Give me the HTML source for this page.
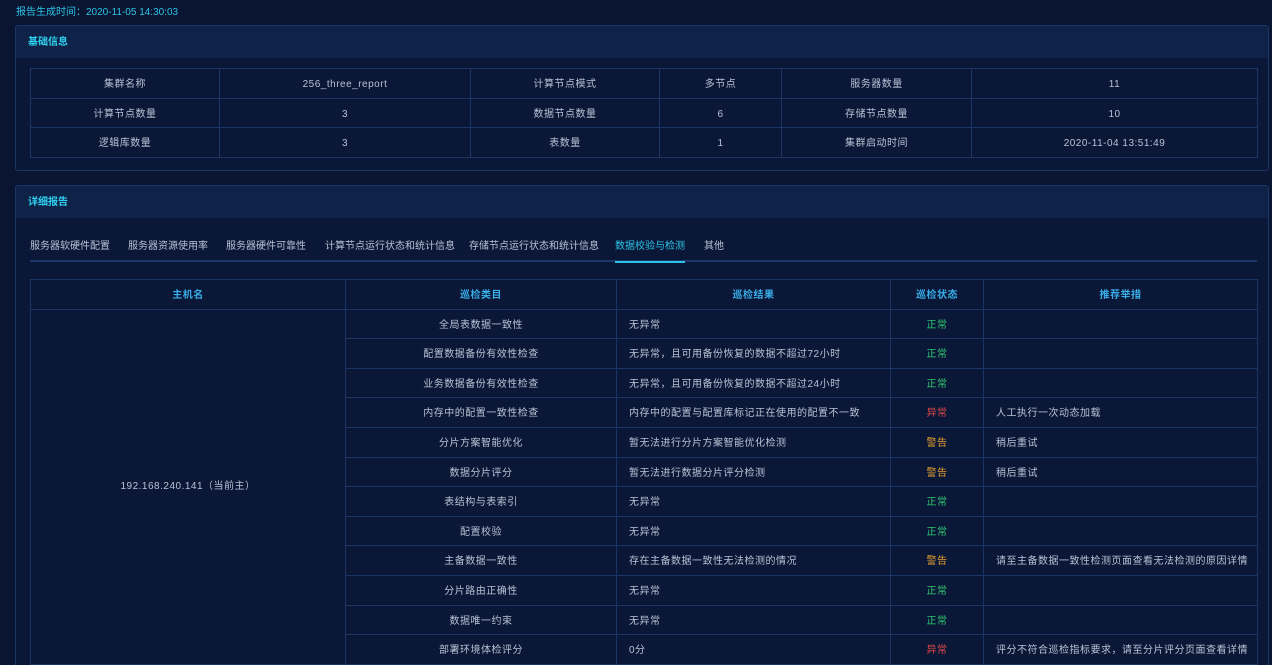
<!DOCTYPE html>
<html><head><meta charset="utf-8"><style>
*{margin:0;padding:0;box-sizing:border-box}
html,body{width:1272px;height:665px;overflow:hidden}
body{background:#0a1532;font-family:"Liberation Sans","Noto Sans CJK SC",sans-serif;font-size:10px;color:#b8c2d4;position:relative}
.ts{position:absolute;left:16px;top:3px;color:#2cc4e6;font-size:10px}
.card{position:absolute;left:15px;width:1254px;border:1px solid #1b3566;border-radius:3px;background:#0b1737}
.hd{height:32px;background:#0f2349;line-height:34px;padding-left:12px;color:#2fd0f0;font-weight:bold;font-size:10px}
table{border-collapse:collapse;position:absolute;left:14px;table-layout:fixed}
tr{height:29.6px}
td,th{border:1px solid #1d3564;text-align:center;font-weight:normal;letter-spacing:.5px;line-height:14px;vertical-align:top;padding:9px 0 0 0;white-space:nowrap}
td[rowspan]{vertical-align:middle;padding:0}
th{color:#3aaee8;font-weight:bold}
.l{text-align:left;padding-left:12px}
.g{color:#2fc870}.r{color:#e04848}.y{color:#e8a030}
.tabs{position:absolute;left:14px;top:51px;width:1227px;height:25px;border-bottom:2px solid #1b3566}
.tabs span{position:absolute;top:0;white-space:nowrap}
.act{color:#2cc4e6;border-bottom:2px solid #2cc4e6;height:26px}
</style></head><body>
<div class="ts">报告生成时间：2020-11-05 14:30:03</div>
<div class="card" style="top:25px;height:146px">
<div class="hd">基础信息</div>
<table style="top:42px;width:1227px">
<colgroup><col style="width:189px"><col style="width:251px"><col style="width:189px"><col style="width:122px"><col style="width:190px"><col style="width:286px"></colgroup>
<tr><td>集群名称</td><td>256_three_report</td><td>计算节点模式</td><td>多节点</td><td>服务器数量</td><td>11</td></tr>
<tr><td>计算节点数量</td><td>3</td><td>数据节点数量</td><td>6</td><td>存储节点数量</td><td>10</td></tr>
<tr><td>逻辑库数量</td><td>3</td><td>表数量</td><td>1</td><td>集群启动时间</td><td>2020-11-04 13:51:49</td></tr>
</table></div>
<div class="card" style="top:185px;height:500px">
<div class="hd">详细报告</div>
<div class="tabs">
<span style="left:0">服务器软硬件配置</span><span style="left:98px">服务器资源使用率</span><span style="left:196px">服务器硬件可靠性</span><span style="left:295px">计算节点运行状态和统计信息</span><span style="left:439px">存储节点运行状态和统计信息</span><span class="act" style="left:585px">数据校验与检测</span><span style="left:674px">其他</span>
</div>
<table style="top:93px;width:1227px">
<colgroup><col style="width:315px"><col style="width:271px"><col style="width:274px"><col style="width:93px"><col style="width:274px"></colgroup>
<tr><th>主机名</th><th>巡检类目</th><th>巡检结果</th><th>巡检状态</th><th>推荐举措</th></tr>
<tr><td rowspan="12">192.168.240.141（当前主）</td><td>全局表数据一致性</td><td class="l">无异常</td><td class="g">正常</td><td class="l"></td></tr>
<tr><td>配置数据备份有效性检查</td><td class="l">无异常，且可用备份恢复的数据不超过72小时</td><td class="g">正常</td><td></td></tr>
<tr><td>业务数据备份有效性检查</td><td class="l">无异常，且可用备份恢复的数据不超过24小时</td><td class="g">正常</td><td></td></tr>
<tr><td>内存中的配置一致性检查</td><td class="l">内存中的配置与配置库标记正在使用的配置不一致</td><td class="r">异常</td><td class="l">人工执行一次动态加载</td></tr>
<tr><td>分片方案智能优化</td><td class="l">暂无法进行分片方案智能优化检测</td><td class="y">警告</td><td class="l">稍后重试</td></tr>
<tr><td>数据分片评分</td><td class="l">暂无法进行数据分片评分检测</td><td class="y">警告</td><td class="l">稍后重试</td></tr>
<tr><td>表结构与表索引</td><td class="l">无异常</td><td class="g">正常</td><td></td></tr>
<tr><td>配置校验</td><td class="l">无异常</td><td class="g">正常</td><td></td></tr>
<tr><td>主备数据一致性</td><td class="l">存在主备数据一致性无法检测的情况</td><td class="y">警告</td><td class="l">请至主备数据一致性检测页面查看无法检测的原因详情</td></tr>
<tr><td>分片路由正确性</td><td class="l">无异常</td><td class="g">正常</td><td></td></tr>
<tr><td>数据唯一约束</td><td class="l">无异常</td><td class="g">正常</td><td></td></tr>
<tr><td>部署环境体检评分</td><td class="l">0分</td><td class="r">异常</td><td class="l">评分不符合巡检指标要求，请至分片评分页面查看详情</td></tr>
</table></div>
</body></html>
